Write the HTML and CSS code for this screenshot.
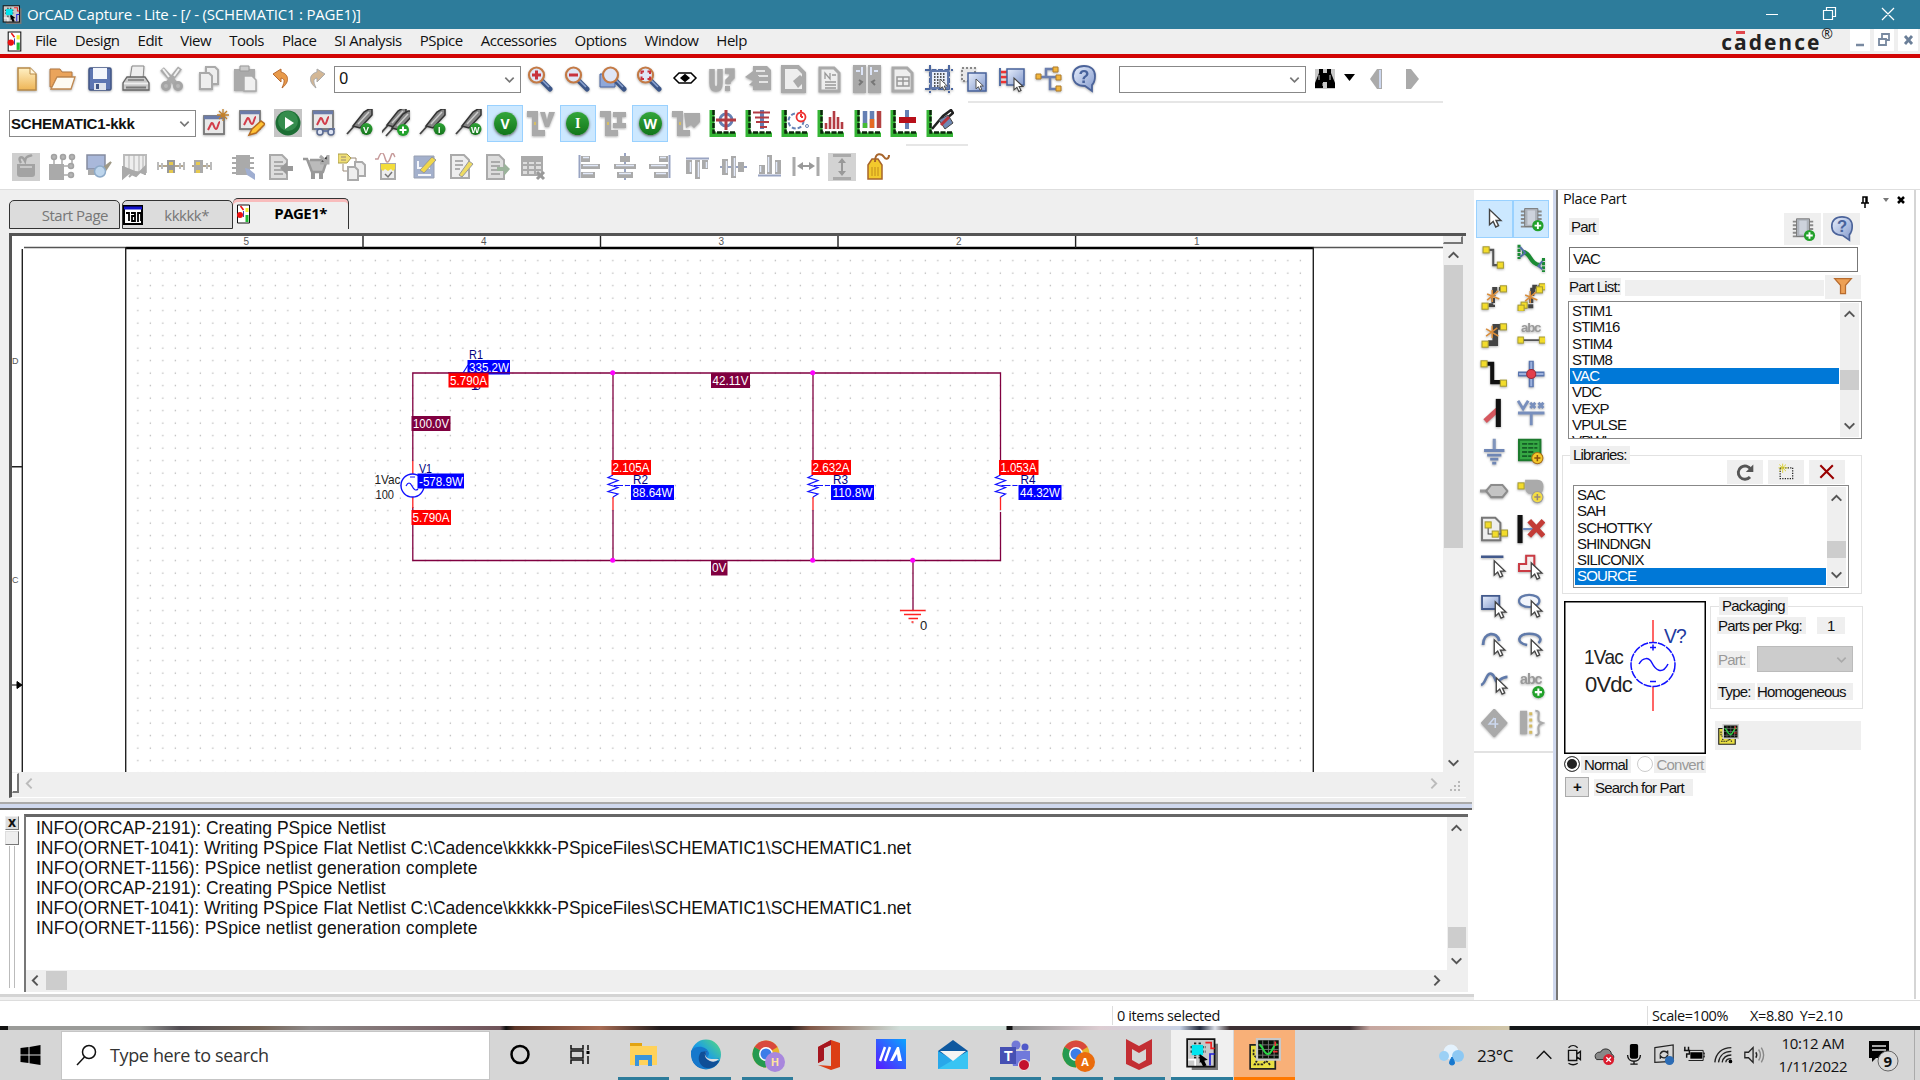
FILE: index.html
```html
<!DOCTYPE html>
<html lang="en">
<head>
<meta charset="utf-8">
<title>OrCAD Capture - Lite</title>
<link rel="stylesheet" href="styles.css">
</head>
<body>
<svg width="0" height="0" class="defs">
<defs>
<linearGradient id="gOr" x1="0" y1="0" x2="0" y2="1"><stop offset="0" stop-color="#fff0c4"/><stop offset="1" stop-color="#eeb556"/></linearGradient>
<linearGradient id="gBl" x1="0" y1="0" x2="1" y2="1"><stop offset="0" stop-color="#e8effc"/><stop offset="1" stop-color="#8198cc"/></linearGradient>
<linearGradient id="gGn" x1="0" y1="0" x2="0" y2="1"><stop offset="0" stop-color="#2fa336"/><stop offset="1" stop-color="#15751c"/></linearGradient>
<linearGradient id="gEdge" x1="0" y1="1" x2="1" y2="0"><stop offset="0" stop-color="#0a58ad"/><stop offset=".5" stop-color="#1c9fe4"/><stop offset="1" stop-color="#58dc7a"/></linearGradient>
<linearGradient id="gMa" x1="0" y1="1" x2="1" y2="0"><stop offset="0" stop-color="#5a16ff"/><stop offset="1" stop-color="#0aa5ff"/></linearGradient>
<g id="cur"><path d="M0 0v14l3.4-3 2.3 5 2.6-1.2-2.3-4.8h4.5z" fill="#fff" stroke="#444" stroke-width="1.3"/></g>
<g id="lens"><path d="M16 16l8 8" stroke="#3c5688" stroke-width="5" stroke-linecap="round"/><path d="M16 15l7 7" stroke="#8ba3d0" stroke-width="1.500"/><circle cx="10.500" cy="10" r="7.500" fill="#dfe6f7" stroke="#c47a45" stroke-width="2.200"/></g>
<g id="axis"><path d="M3 1v25h24" fill="none" stroke="#35b535" stroke-width="5"/><path d="M4.500 1v22.500h22" fill="none" stroke="#0b290b" stroke-width="2.500" stroke-dasharray="5 1.500"/></g>
<g id="probe"><path d="M1 25l9-10" stroke="#444" stroke-width="1.800"/><path d="M7 17L18 3l5-3h3v6L14 19z" fill="#858585" stroke="#333" stroke-width="1.500"/><path d="M12 15L23 3" stroke="#ccc" stroke-width="1.500"/></g>
<g id="dot"><circle cx="20.500" cy="20" r="6" fill="url(#gGn)"/></g>
<g id="y"><rect width="6" height="6" fill="#f3dc2b" stroke="#a59a33"/></g>
<g id="plus"><circle cx="21" cy="21" r="6" fill="#22a12b"/><path d="M21 17.500v7M17.500 21h7" stroke="#fff" stroke-width="2"/></g>
<symbol id="new" viewBox="0 0 28 28"><path d="M5 3h12l6 6v16H5z" fill="url(#gOr)" stroke="#b88a48" stroke-width="1.500"/><path d="M17 3v6h6" fill="#fff6dc" stroke="#b88a48"/></symbol>
<symbol id="open" viewBox="0 0 28 28"><path d="M1 4h10l2 3h10v5H8L3 22H1z" fill="#eaa45c" stroke="#b27842"/><path d="M2 24l6-12h18l-4 12z" fill="#fdfaf2" stroke="#c08850" stroke-width="1.300"/></symbol>
<symbol id="save" viewBox="0 0 28 28"><rect x="3" y="3" width="22" height="22" rx="1.500" fill="#5d76b2" stroke="#415685" stroke-width="1.500"/><path d="M7 3h14v11H7z" fill="#f3f6fd"/><path d="M8 18h12v7H8z" fill="#dfe4ee"/><path d="M10 19h3v5h-3z" fill="#415685"/></symbol>
<symbol id="print" viewBox="0 0 28 28"><path d="M8 14l2-13h12l-1 13" fill="#eee" stroke="#888"/><path d="M5 12h18l4 6v7H1v-7z" fill="#c8c8c8" stroke="#666" stroke-width="1.300"/><path d="M6 15h16" stroke="#777" stroke-width="1.500"/><path d="M2 18.500h24" stroke="#eee" stroke-width="1.800"/><path d="M4 22.500h20" stroke="#777" stroke-width="2"/></symbol>
<symbol id="cut" viewBox="0 0 28 28"><path d="M4 4l13 14M22 3L10 18" stroke="#aaa" stroke-width="5"/><path d="M5 4l6 8M21 4l-5 7" stroke="#f0f0f0" stroke-width="2"/><circle cx="8" cy="21" r="3.500" fill="#b8b8b8" stroke="#a5a5a5" stroke-width="3"/><circle cx="20" cy="21" r="3.500" fill="#b8b8b8" stroke="#a5a5a5" stroke-width="3"/></symbol>
<symbol id="copy" viewBox="0 0 28 28"><path d="M12 2h9l3 3v14H12z" fill="#eee" stroke="#aaa" stroke-width="2"/><path d="M6 8h9l3 3v13H6z" fill="#eee" stroke="#aaa" stroke-width="2"/></symbol>
<symbol id="paste" viewBox="0 0 28 28"><path d="M3 4h21v22H3z" fill="#aaa"/><path d="M9 1h9v5H9z" fill="#ccc" stroke="#999"/><path d="M13 11h8l4 4v11H13z" fill="#f0f0f0" stroke="#aaa" stroke-width="1.500"/></symbol>
<symbol id="undo" viewBox="0 0 28 28"><path d="M6 9l8-5v3c8 2 9 10 1 16 3-7 3-9-1-10v4z" fill="#e89a4a" stroke="#b86a30"/></symbol>
<symbol id="redo" viewBox="0 0 28 28"><path d="M22 9l-8-5v3c-8 2-9 10-1 16-3-7-3-9 1-10v4z" fill="#d3b795" stroke="#aaa"/></symbol>
<symbol id="zin" viewBox="0 0 28 28"><use href="#lens"/><path d="M10.500 5.500v9M6 10h9" stroke="#c8323e" stroke-width="3"/></symbol>
<symbol id="zout" viewBox="0 0 28 28"><use href="#lens"/><path d="M6 10h9" stroke="#c8323e" stroke-width="3"/></symbol>
<symbol id="zarea" viewBox="0 0 28 28"><path d="M1 9h15v13H1z" fill="#90a8d8" stroke="#4b67a3"/><use href="#lens" x="1"/></symbol>
<symbol id="zall" viewBox="0 0 28 28"><use href="#lens"/><path d="M6.500 9V6.500H9M12.500 6.500H15V9M15 11.500v2.500h-2.500M9 14H6.500v-2.500" fill="none" stroke="#c8323e" stroke-width="2"/></symbol>
<symbol id="eye" viewBox="0 0 28 28"><path d="M3 13l5-5h12l5 5-5 5H8z" fill="#fff" stroke="#000" stroke-width="1.500"/><path d="M10.500 13l3.500-3 3.500 3-3.500 3z" fill="#000" stroke="#000" stroke-width="2"/></symbol>
<symbol id="uq" viewBox="0 0 28 28"><path d="M4 4v14q0 6 4 6t4-6V4M17 6h7v6l-4 4v3" fill="none" stroke="#aaa" stroke-width="5.500"/><path d="M17 21h5v5h-5z" fill="#aaa"/></symbol>
<symbol id="back" viewBox="0 0 28 28"><path d="M9 1h14l4 4v20H9z" fill="#aaa"/><path d="M12 6h9M14 11h10M15 17h9" stroke="#e4e4e4" stroke-width="2"/><path d="M14 22l-9-2 4-4-8-4 8-6v5h6z" fill="#aaa"/></symbol>
<symbol id="pgset" viewBox="0 0 28 28"><path d="M3 2h15l6 6v18H3z" fill="#eee" stroke="#aaa" stroke-width="4"/><path d="M13 16l7-6 6 5-8 8z" fill="#aaa"/></symbol>
<symbol id="npage" viewBox="0 0 28 28"><path d="M4 3h14l5 5v18H4z" fill="#eee" stroke="#aaa" stroke-width="3"/><path d="M9 14V8l5 6V8M16 10h4M9 17h11M9 20h11M9 23h11" fill="none" stroke="#999" stroke-width="1.300"/></symbol>
<symbol id="cmp" viewBox="0 0 28 28"><path d="M1 1h11v26H1zM16 1h11v26H16z" fill="#aaa" stroke="#aaa" stroke-width="2"/><path d="M3 6h4M9 2v8M21 6h4M18 2v8" stroke="#dce4f7" stroke-width="2"/><path d="M6 15l3 2-3 3M22 15l-3 2 3 3" fill="none" stroke="#777" stroke-width="2"/></symbol>
<symbol id="rep" viewBox="0 0 28 28"><path d="M4 3h14l5 5v18H4z" fill="#eee" stroke="#aaa" stroke-width="3"/><path d="M8 12h12v9H8zM8 16h12M14 12v9" fill="none" stroke="#999" stroke-width="1.500"/></symbol>
<symbol id="grid" viewBox="0 0 28 28"><path d="M0 5h28M0 24h28M5 0v28M24 0v28" stroke="#4b669f" stroke-width="2" stroke-dasharray="5 1.500"/><rect x="6" y="6" width="17" height="17" fill="#e9eefa" stroke="#6279ac" stroke-width="2"/><path d="M9 9h12M9 12h12M9 15h12M9 18h12M9 21h12" stroke="#222" stroke-width="1.400" stroke-dasharray="1.500 1.500"/><use href="#cur" transform="translate(15 14) scale(.7)"/></symbol>
<symbol id="selarea" viewBox="0 0 28 28"><path d="M1 3h13v13H1z" fill="#e8e8e8" stroke="#888" stroke-width="2" stroke-dasharray="2 2"/><path d="M7 8h18v18H7z" fill="url(#gBl)" stroke="#48639c" stroke-width="1.500"/><use href="#cur" transform="translate(15 14) scale(.7)"/></symbol>
<symbol id="pins" viewBox="0 0 28 28"><path d="M2 3v18" stroke="#5570a5" stroke-width="2"/><path d="M3 7h6M3 12h6M3 17h6" stroke="#e33" stroke-width="2.500"/><path d="M9 4h17v16H9z" fill="url(#gBl)" stroke="#48639c" stroke-width="1.500"/><use href="#cur" transform="translate(16 13) scale(.85)"/></symbol>
<symbol id="tree" viewBox="0 0 28 28"><path d="M4 12h8V4h10M12 12h12M16 12v12h9" fill="none" stroke="#6c7fae" stroke-width="2.500"/><path d="M2 9h5v5H2zM19 2h5v5h-5zM22 10h5v5h-5zM22 21h5v5h-5z" fill="#f1b53c" stroke="#b07d2a"/></symbol>
<symbol id="help" viewBox="0 0 28 28"><path d="M14 1c7 0 11 4 11 10 0 5-1 7-3 9v6l-7-5C7 21 3 17 3 11S7 1 14 1z" fill="url(#gBl)" stroke="#4b639a" stroke-width="1.800"/><text x="8.500" y="17.500" font-size="18" font-weight="bold" fill="#48639c">?</text></symbol>
<symbol id="bino" viewBox="0 0 28 28"><path d="M4 4h20v20H4z" fill="#c9c9c9"/><path d="M8 4h4v4h4V4h4v4l4 10v5h-8v-6h-4v6H4v-5L8 8z" fill="#000"/><path d="M8 10v5M12 18v3M19 10v5" stroke="#ccc"/></symbol>
<symbol id="sim" viewBox="0 0 28 28"><rect x="3" y="7" width="20" height="18" fill="#e8e8e8" stroke="#777" stroke-width="1.800"/><path d="M3 8.500h20" stroke="#6b7ba8" stroke-width="3.500"/><path d="M7 21l3-6c2-4 3 5 5 5s2-7 4-7" fill="none" stroke="#d23c49" stroke-width="2"/></symbol>
<symbol id="simnew" viewBox="0 0 28 28"><use href="#sim" width="28" height="28"/><path d="M22 0v12M16 6h12M18 2l8 8M26 2l-8 8" stroke="#c38029" stroke-width="1.300"/></symbol>
<symbol id="simed" viewBox="0 0 28 28"><use href="#sim" y="-5" width="28" height="28"/><path d="M12 26l3-6 9-8 4 3-9 9z" fill="#ffc335" stroke="#b56b20" stroke-width="1.500"/></symbol>
<symbol id="play" viewBox="0 0 28 28"><path d="M0 0h28v28H0z" fill="#c5c5c5"/><circle cx="14" cy="14" r="12.500" fill="#1c6e34"/><circle cx="14" cy="12" r="10" fill="#358c4d"/><path d="M11 8l9 6-9 6z" fill="#fff"/></symbol>
<symbol id="simv" viewBox="0 0 28 28"><use href="#sim" y="-5" width="28" height="28"/><path d="M5 20h5l2 2h6l2-2h5" fill="none" stroke="#6c7ba6" stroke-width="2"/><circle cx="10" cy="23" r="3" fill="#dde3f2" stroke="#59698f" stroke-width="1.500"/><circle cx="21" cy="23" r="3" fill="#dde3f2" stroke="#59698f" stroke-width="1.500"/></symbol>
<symbol id="pv" viewBox="0 0 28 28"><use href="#probe"/><use href="#dot"/><text x="17" y="23.500" font-size="9" font-weight="bold" fill="#fff">V</text></symbol>
<symbol id="pp" viewBox="0 0 28 28"><use href="#probe" x="-2" y="-1"/><use href="#probe" x="3" y="2"/><use href="#plus"/></symbol>
<symbol id="pi" viewBox="0 0 28 28"><use href="#probe"/><use href="#dot"/><text x="19" y="23.500" font-size="9" font-weight="bold" fill="#fff">I</text></symbol>
<symbol id="pw" viewBox="0 0 28 28"><use href="#probe"/><use href="#dot"/><text x="16" y="23.500" font-size="9" font-weight="bold" fill="#fff">W</text></symbol>
<symbol id="gv" viewBox="0 0 28 28"><path d="M0 2h11v19h7v6H5V8H0z" fill="#aaa"/><path d="M13 3l5 15h4l6-15h-6l-2 8-2-8z" fill="#aaa"/><path d="M8 13v3" stroke="#e5c44d" stroke-width="1.500"/></symbol>
<symbol id="gi" viewBox="0 0 28 28"><path d="M0 2h11v19h7v6H5V8H0z" fill="#aaa"/><path d="M13 3h13v5h-4v6h4v5H13v-5h4V8h-4z" fill="#aaa"/><path d="M8 13v3" stroke="#e5c44d" stroke-width="1.500"/></symbol>
<symbol id="gw" viewBox="0 0 28 28"><path d="M0 2h11v19h7v6H5V8H0z" fill="#aaa"/><path d="M12 4h16v9l-6 6-3-3-5 3z" fill="#aaa"/><path d="M8 13v3" stroke="#e5c44d" stroke-width="1.500"/></symbol>
<symbol id="m1" viewBox="0 0 28 28"><use href="#axis"/><circle cx="17" cy="11" r="6" fill="none" stroke="#6580b4" stroke-width="3"/><path d="M17 1v20M7 11h20" stroke="#b33c43" stroke-width="3"/></symbol>
<symbol id="m2" viewBox="0 0 28 28"><use href="#axis"/><path d="M17 1v19" stroke="#6580b4" stroke-width="4"/><path d="M8 3.500h17M10 8.500h14M11 13h13M15 18h7" stroke="#b33c43" stroke-width="2"/></symbol>
<symbol id="m3" viewBox="0 0 28 28"><use href="#axis"/><circle cx="15" cy="12" r="7.500" fill="#fff" stroke="#6580b4" stroke-width="2" stroke-dasharray="4 2"/><circle cx="20" cy="8" r="4.500" fill="#fff" stroke="#e33" stroke-width="1.800"/><path d="M20 1v3M20 8V5M20 8h2" stroke="#e33" stroke-width="2"/><circle cx="26" cy="17" r="1.500" fill="none" stroke="#6580b4"/></symbol>
<symbol id="m4" viewBox="0 0 28 28"><use href="#axis"/><path d="M9 20v-6M13 20V8M17 20V2M21 20V8M25 20v-7" stroke="#b33c43" stroke-width="2.600"/></symbol>
<symbol id="m5" viewBox="0 0 28 28"><use href="#axis"/><path d="M11 2v17M18 2v17" stroke="#6580b4" stroke-width="4.500"/><path d="M11 14v5" stroke="#45bb34" stroke-width="4.500"/><path d="M18 10v9" stroke="#e56a23" stroke-width="4.500"/><path d="M25 2v17" stroke="#b34242" stroke-width="4.500"/></symbol>
<symbol id="m6" viewBox="0 0 28 28"><use href="#axis"/><path d="M17 1v19" stroke="#6580b4" stroke-width="4"/><path d="M9 11h17" stroke="#b8101a" stroke-width="6"/></symbol>
<symbol id="m7" viewBox="0 0 28 28"><use href="#axis"/><path d="M6 20L17 7l8-6 2 3-7 6" fill="none" stroke="#222" stroke-width="2.500"/><path d="M13 11l9-5 5 8-8 6z" fill="#6f88b4" stroke="#444"/><path d="M15 16l8-8" stroke="#b8343c" stroke-width="3"/></symbol>
<symbol id="a1" viewBox="0 0 28 28"><path d="M0 0h28v28H0z" fill="#cfcfcf"/><path d="M5 11h18v10q0 3-3 3H8q-3 0-3-3z" fill="#a3a3a3"/><path d="M8 14h12" stroke="#c8c8c8" stroke-width="2"/><path d="M9 10c-4-6 1-8 4-2 1-6 4-4 7-6" fill="none" stroke="#a0a0a0" stroke-width="2.500"/></symbol>
<symbol id="a2" viewBox="0 0 28 28"><path d="M1 11h15v16H1z" fill="#aaa"/><g fill="#b5b5b5" stroke="#a2a2a2" stroke-width="1.500"><circle cx="6" cy="4" r="2.500"/><circle cx="15" cy="4" r="2.500"/><circle cx="24" cy="4" r="2.500"/><circle cx="23" cy="13" r="2.500"/><circle cx="23" cy="22" r="2.500"/></g><path d="M6 7v5M14 7v5M24 7v3M16 13h5M16 22h5" stroke="#aaa" stroke-width="1.500"/></symbol>
<symbol id="a3" viewBox="0 0 28 28"><path d="M2 2h18v14H2z" fill="#a9b8da" stroke="#858ca0" stroke-width="1.500"/><path d="M3 17h12v5H3z" fill="#aaa"/><path d="M17 16l9-7-6 9" fill="#a09a88" stroke="#a09a88" stroke-width="2"/><circle cx="15" cy="18.500" r="5.500" fill="#bdd5ec" stroke="#8daac8" stroke-width="1.500"/></symbol>
<symbol id="a4" viewBox="0 0 28 28"><path d="M3 2h22v17H3z" fill="#eee" stroke="#bbb" stroke-width="2"/><path d="M8 2v17M13 2v17M18 2v17M22 2v17" stroke="#b0b0b0"/><path d="M2 13v12l6-5 7 3 9-9v8M8 24l5-5" fill="#aaa" stroke="#aaa" stroke-width="2"/></symbol>
<symbol id="a5" viewBox="0 0 28 28"><path d="M0 13h28" stroke="#b4a78e" stroke-width="2"/><path d="M1 9v8M5 10v6M23 10v6M27 9v8" stroke="#bbb" stroke-width="2"/><path d="M10 7h8v13h-8z" fill="#999"/><path d="M12 9h4v3h-4zM12 17h4v3h-4z" fill="#e6c94f"/></symbol>
<symbol id="a6" viewBox="0 0 28 28"><path d="M3 13h20" stroke="#b4a78e" stroke-width="2"/><path d="M18 10v6M22 9v8" stroke="#bbb" stroke-width="2"/><path d="M5 7h9v13H5z" fill="#aaa"/><path d="M7 9h4v3H7zM7 17h4v3H7z" fill="#e6c94f"/></symbol>
<symbol id="a7" viewBox="0 0 28 28"><path d="M7 2h14v20H7z" fill="#aaa"/><path d="M3 5h22M3 10h22M3 15h22M3 20h18" stroke="#aaa" stroke-width="2"/><path d="M16 15l4 1 6 5v6l-8-5z" fill="#9faed1"/></symbol>
<symbol id="a8" viewBox="0 0 28 28"><path d="M4 2h12l5 5v19H4z" fill="#ddd" stroke="#aaa" stroke-width="2"/><path d="M8 9h9M8 13h9M8 17h9M8 21h9" stroke="#999" stroke-width="1.500"/><path d="M14 15l7-6v4h6v5h-6v4z" fill="#999"/></symbol>
<symbol id="a9" viewBox="0 0 28 28"><path d="M1 6h4l5 13h11l4-12H8" fill="#bbb" stroke="#999" stroke-width="2.500"/><path d="M9 20h4v6H9zM17 20h4v6h-4z" fill="#999"/><path d="M18 3l8 7M26 2v8h-8" stroke="#aaa" stroke-width="3"/></symbol>
<symbol id="a10" viewBox="0 0 28 28"><path d="M0 1h9l4 4-4 5H0z" fill="#f0df75" stroke="#aa9c4c"/><path d="M3 4h5M3 7h5M13 5h5v4M5 11v7h5" fill="none" stroke="#987"/><path d="M17 9h7l3 3v11H17z" fill="#eee" stroke="#aaa" stroke-width="2"/><path d="M10 14h7l3 3v10H10z" fill="#eee" stroke="#aaa" stroke-width="2"/></symbol>
<symbol id="a11" viewBox="0 0 28 28"><path d="M1 6h3c3-8 5-8 7-1s4 4 6-2 3 0 4 1" fill="none" stroke="#c69a9a" stroke-width="1.500"/><path d="M7 11h14v15H7z" fill="#eee" stroke="#aaa" stroke-width="2"/><path d="M7 11h14v5l-2 2-2-2-3 2-3-2-2 2-2-2z" fill="#f3dd3b"/><path d="M11 21l3 3 4-5" fill="none" stroke="#777" stroke-width="1.500"/></symbol>
<symbol id="a12" viewBox="0 0 28 28"><path d="M3 3h20v22H3z" fill="#a3b0cc" stroke="#98a0b2"/><path d="M7 8v7h12M7 22h13" fill="none" stroke="#f4f6fb" stroke-width="2"/><path d="M9 17L21 4l4 3-12 13z" fill="#f0d74b" stroke="#999"/></symbol>
<symbol id="a13" viewBox="0 0 28 28"><path d="M4 2h13l5 5v18H4z" fill="#eee" stroke="#aaa" stroke-width="2"/><path d="M8 8h8M8 12h8M8 16h5" stroke="#999" stroke-width="1.500"/><path d="M12 22L22 8l4 3-11 13z" fill="#eedb62" stroke="#999"/></symbol>
<symbol id="a14" viewBox="0 0 28 28"><path d="M4 2h12l5 5v19H4z" fill="#ddd" stroke="#aaa" stroke-width="2"/><path d="M8 9h9M8 13h9M8 17h9M8 21h9" stroke="#999" stroke-width="1.500"/><path d="M14 14h7v-4l6 6-6 7v-5h-7z" fill="#9bb39b"/></symbol>
<symbol id="a15" viewBox="0 0 28 28"><path d="M3 4h20v18H3z" fill="#ddd" stroke="#aaa" stroke-width="2"/><path d="M3 7h20" stroke="#aaa" stroke-width="4"/><path d="M3 12h20M3 17h20M9 4v18M16 4v18" stroke="#aaa" stroke-width="2"/><path d="M18 19l7 7M25 19l-7 7" stroke="#999" stroke-width="3"/></symbol>
<symbol id="al" viewBox="0 0 28 28"><path d="M5.500 2v23" stroke="#99a4c2" stroke-width="2"/><path d="M7 3h9v6H7zM7 11h19v5H7zM7 19h14v6H7z" fill="#aaa"/><path d="M9 4.500h6M9 12.500h15M9 20.500h10" stroke="#e3eafa" stroke-width="1.500"/></symbol>
<symbol id="ac" viewBox="0 0 28 28"><path d="M14 0v27" stroke="#99a4c2" stroke-width="2"/><path d="M9 3h10v6H9zM3 11h22v5H3zM6 19h16v6H6z" fill="#aaa"/><path d="M5 12.500h18M8 20.500h12" stroke="#e3eafa" stroke-width="1.500"/></symbol>
<symbol id="ar" viewBox="0 0 28 28"><use href="#al" transform="matrix(-1 0 0 1 28 0)" width="28" height="28"/></symbol>
<symbol id="at" viewBox="0 0 28 28"><use href="#al" transform="rotate(90 14 14)" width="28" height="28"/></symbol>
<symbol id="am" viewBox="0 0 28 28"><use href="#ac" transform="rotate(90 14 14)" width="28" height="28"/></symbol>
<symbol id="ab" viewBox="0 0 28 28"><use href="#al" transform="matrix(0 -1 1 0 0 28)" width="28" height="28"/></symbol>
<symbol id="dh" viewBox="0 0 28 28"><path d="M2 4v19M26 4v19" stroke="#aaa" stroke-width="3"/><path d="M7 13h14" stroke="#999" stroke-width="2"/><path d="M5 13l6-4v8zM23 13l-6-4v8z" fill="#999"/></symbol>
<symbol id="dv" viewBox="0 0 28 28"><path d="M0 0h28v28H0z" fill="#d3d3d3"/><path d="M5 2.500h18M5 25.500h18" stroke="#aaa" stroke-width="3"/><path d="M14 7v14" stroke="#999" stroke-width="2"/><path d="M14 5l-4 5h8zM14 23l-4-5h8z" fill="#999"/></symbol>
<symbol id="tag" viewBox="0 0 28 28"><path d="M4 12l4-6h6l4 6v14H4z" fill="#f2c92c" stroke="#a7642b" stroke-width="1.500"/><path d="M11 9c0-11 7-8 9-5s5 2 5-2" fill="none" stroke="#a7642b" stroke-width="2"/><path d="M8 14v9M11 14v9M14 14v9" stroke="#c28c1b"/></symbol>
<symbol id="arrow" viewBox="0 0 28 28"><use href="#cur" transform="translate(9 4) scale(1.150)"/></symbol>
<symbol id="chip" viewBox="0 0 28 28"><path d="M3 6h22M3 10h22M3 14h22M3 18h22M3 22h18" stroke="#8a8a8a" stroke-width="2"/><path d="M7 3h14v19H7z" fill="#aeb3bb" stroke="#777"/><path d="M10 5h8v15h-8z" fill="#cdd2dc"/><use href="#plus"/></symbol>
<symbol id="wire" viewBox="0 0 28 28"><path d="M6 6h7v15h8" fill="none" stroke="#555" stroke-width="2"/><use href="#y" x="3" y="3"/><use href="#y" x="17" y="18"/></symbol>
<symbol id="bundle" viewBox="0 0 28 28"><path d="M5 8c9 0 7 12 18 13" fill="none" stroke="#1b8b34" stroke-width="4"/><path d="M2 1v14M26 14v14" stroke="#1b8b34" stroke-width="3" stroke-dasharray="3 1"/><path d="M3 3l5 6-5 4M25 17l-4 5 4 3" fill="none" stroke="#5270a5" stroke-width="2"/></symbol>
<symbol id="aw1" viewBox="0 0 28 28"><path d="M12 6h9M14 6v7M13 15v7H7" fill="none" stroke="#444" stroke-width="3.500" stroke-dasharray="5 1.500"/><path d="M12 7v12M7 11l12 5M18 8L7 17" stroke="#d98d3b" stroke-width="1.500"/><use href="#y" x="20" y="3"/><use href="#y" x="2" y="20"/></symbol>
<symbol id="aw2" viewBox="0 0 28 28"><path d="M13 7h8M15 4h8M15 8v6M14 15v8H8" fill="none" stroke="#444" stroke-width="4" stroke-dasharray="5 1"/><path d="M13 8v12M8 12l12 5M19 9L8 18" stroke="#d98d3b" stroke-width="1.500"/><use href="#y" x="22" y="1"/><use href="#y" x="19" y="4"/><use href="#y" x="4" y="19"/><use href="#y" x="1" y="22"/></symbol>
<symbol id="aw3" viewBox="0 0 28 28"><path d="M21 6h-6v16H8" fill="none" stroke="#444" stroke-width="5.500"/><path d="M12 5v12M6 8l12 7M17 7L6 15" stroke="#d98d3b" stroke-width="1.500"/><use href="#y" x="20" y="3"/><use href="#y" x="2" y="20"/></symbol>
<symbol id="abc" viewBox="0 0 28 28"><text x="4" y="11" font-size="13" font-weight="bold" fill="#999" textLength="20">abc</text><path d="M5 19h19" stroke="#555" stroke-width="1.800"/><use href="#y" x="1" y="16" transform="scale(.9 1)"/><use href="#y" x="22" y="16"/></symbol>
<symbol id="bus" viewBox="0 0 28 28"><path d="M5 4h7v18h9" fill="none" stroke="#111" stroke-width="4"/><use href="#y" x="1" y="1"/><use href="#y" x="20" y="20"/></symbol>
<symbol id="junc" viewBox="0 0 28 28"><path d="M14 1v26M1 14h26" stroke="#5874ae" stroke-width="5"/><path d="M14 2v24M2 14h24" stroke="#9db2dd" stroke-width="2"/><circle cx="14" cy="14" r="4.500" fill="#e33e4a" stroke="#9a2430"/></symbol>
<symbol id="ent" viewBox="0 0 28 28"><path d="M5 22l12-11" stroke="#d6575e" stroke-width="5"/><path d="M18 0v28" stroke="#111" stroke-width="5"/></symbol>
<symbol id="vcc" viewBox="0 0 28 28"><path d="M1 2l5 8 5-8M13 4l5 5M18 4l-5 5M21 4l5 5M26 4l-5 5M1 14h26M14 14v12" fill="none" stroke="#788fbd" stroke-width="2.800"/></symbol>
<symbol id="gnd" viewBox="0 0 28 28"><path d="M14 1v12" stroke="#8195bc" stroke-width="3"/><path d="M4 12.500h20M7 17h14M10 21h8M12 25h4" stroke="#6f86b5" stroke-width="2.800"/></symbol>
<symbol id="hier" viewBox="0 0 28 28"><path d="M2 2h21v20H2z" fill="#36a844" stroke="#1c7a2d" stroke-width="2"/><path d="M5 6h15M5 10h15M5 14h12M5 18h9" stroke="#155e26" stroke-width="1.800" stroke-dasharray="5 1"/><circle cx="20" cy="20" r="5.500" fill="#f3c82a" stroke="#a86c17"/><path d="M20 17v6M17 20h6" stroke="#89500d" stroke-width="1.500"/></symbol>
<symbol id="port" viewBox="0 0 28 28"><path d="M0 14h7" stroke="#999" stroke-width="3"/><path d="M6 14l5-6h11l5 6-5 6H11z" fill="#c4c4c4" stroke="#8c8c8c" stroke-width="2"/></symbol>
<symbol id="hp" viewBox="0 0 28 28"><path d="M8 3h12q6 0 6 7t-6 7h-6q-6 0-6-7z" fill="#aaa"/><use href="#y" x="1" y="6"/><circle cx="20" cy="20" r="5.500" fill="#f4dd43" stroke="#999"/><path d="M20 17v6M17 20h6" stroke="#987" stroke-width="1.500"/></symbol>
<symbol id="off" viewBox="0 0 28 28"><path d="M2 3h13l5 5v17H2z" fill="#eee" stroke="#777" stroke-width="2"/><path d="M8 9v10h16" fill="none" stroke="#444"/><use href="#y" x="5" y="7"/><use href="#y" x="12" y="16"/><use href="#y" x="21" y="15"/></symbol>
<symbol id="nc" viewBox="0 0 28 28"><path d="M3 0v28" stroke="#111" stroke-width="5"/><path d="M6 14h12" stroke="#6d8ac1" stroke-width="2"/><path d="M12 6l14 15M26 6L12 21" stroke="#c33b36" stroke-width="5"/></symbol>
<symbol id="line" viewBox="0 0 28 28"><path d="M1 3h22" stroke="#42598c" stroke-width="2.500"/><use href="#cur" transform="translate(14 7)"/></symbol>
<symbol id="poly" viewBox="0 0 28 28"><path d="M2 17v-7h7V2h8v15z" fill="#f6eeee" stroke="#ca3b44" stroke-width="2"/><use href="#cur" transform="translate(14 9)"/></symbol>
<symbol id="rect" viewBox="0 0 28 28"><path d="M2 3h17v13H2z" fill="url(#gBl)" stroke="#42598c" stroke-width="1.800"/><use href="#cur" transform="translate(15 9)"/></symbol>
<symbol id="ell" viewBox="0 0 28 28"><ellipse cx="12" cy="8" rx="10" ry="6" fill="#f2f5fb" stroke="#607aaa" stroke-width="2.200"/><use href="#cur" transform="translate(14 8)"/></symbol>
<symbol id="arc" viewBox="0 0 28 28"><path d="M3 13C3 0 17-1 19 9" fill="none" stroke="#607aaa" stroke-width="2.800"/><use href="#cur" transform="translate(14 8)"/></symbol>
<symbol id="earc" viewBox="0 0 28 28"><path d="M10 13C-2 11 1 2 12 2s13 6 9 9" fill="none" stroke="#607aaa" stroke-width="2.500"/><use href="#cur" transform="translate(14 8)"/></symbol>
<symbol id="bez" viewBox="0 0 28 28"><path d="M1 14C6 13 6 1 11 3s3 10 7 7 5-4 9-4" fill="none" stroke="#607aaa" stroke-width="2.500"/><use href="#cur" transform="translate(16 7)"/></symbol>
<symbol id="text" viewBox="0 0 28 28"><text x="3" y="13" font-size="14" font-weight="bold" fill="#999" textLength="22">abc</text><use href="#plus"/></symbol>
<symbol id="dia" viewBox="0 0 28 28"><path d="M14 1l12 13-12 13L2 14z" fill="#aaa" stroke="#aaa" stroke-width="2" stroke-linejoin="round"/><path d="M15 9v10M14 9l-5 6h9" fill="none" stroke="#ccd8ee" stroke-width="1.500"/></symbol>
<symbol id="brace" viewBox="0 0 28 28"><path d="M3 2h7v23H3z" fill="#aaa"/><path d="M12 5h3M12 11h3M12 17h3M12 23h3" stroke="#d4bb63" stroke-width="3"/><path d="M18 2c5 0 3 3 3 7s1 4 4 5c-3 1-4 2-4 5s2 7-3 7" fill="none" stroke="#aaa" stroke-width="2"/></symbol>
<symbol id="doc" viewBox="0 0 14 20"><path d="M1 1h12v18H1z" fill="#fff" stroke="#111"/><circle cx="3.500" cy="11" r="3" fill="#e11"/><path d="M4 2l3 4" stroke="#e11" stroke-width="1.500"/><path d="M9 4h3v4H9z" fill="#ee3"/><path d="M9 11h3v7H9z" fill="#2b3"/><path d="M7 7v6" stroke="#44a"/></symbol>
<symbol id="cap" viewBox="0 0 28 28"><path d="M5 5h23v23H5z" fill="#777"/><path d="M1 1h24v24H1z" fill="#c9c9c9" stroke="#111" stroke-width="1.500"/><path d="M4 8h13M4 12h13M8 4v14M12 4v14" stroke="#222" stroke-width="2" stroke-dasharray="1.500 1"/><path d="M5 6h10v9H5z" fill="#00e5ee"/><path d="M17 4h5v5h3" fill="none" stroke="#e22" stroke-width="1.500"/><path d="M25 14h-4v10" fill="none" stroke="#22d" stroke-width="1.500"/><path d="M2 19h6v5" fill="none" stroke="#fff" stroke-width="1.500"/><path d="M12 14l7 5-3 1 2 4-3 1-2-4-1 1z" fill="#000"/></symbol>
<symbol id="spice" viewBox="0 0 28 28"><path d="M1 6h22v21H1z" fill="#e9df43" stroke="#222" stroke-width="1.500"/><path d="M4 10v5l4 3-3 5h7l3-3 4 4" fill="none" stroke="#222" stroke-width="1.500" stroke-dasharray="2 1"/><path d="M7 1h20v18H7z" fill="#081008" stroke="#c8c8c8" stroke-width="2"/><path d="M8 6h18M8 10h18M8 15h18M12 2v16M17 2v16M22 2v16" stroke="#777" stroke-width=".8"/><path d="M9 6c3 0 4 9 8 8s4-10 8-8" fill="none" stroke="#2bd546" stroke-width="1.800"/><path d="M23 3v4M21 12h4" stroke="#e33" stroke-width="1.500"/></symbol>
<symbol id="chrome" viewBox="0 0 32 32"><circle cx="15" cy="15" r="13.500" fill="#e8b52e"/><path d="M15 15L3.500 8a13.500 13.500 0 0 1 23 0z" fill="#d9493d"/><path d="M15 15v13.500A13.500 13.500 0 0 1 3.500 8z" fill="#249a50"/><circle cx="15" cy="15" r="7" fill="#fff"/><circle cx="15" cy="15" r="5.500" fill="#3b7de8"/></symbol>
<symbol id="chev" viewBox="0 0 14 14"><path d="M2.500 5L7 9.500 11.500 5" fill="none" stroke="currentColor" stroke-width="1.800"/></symbol>
</defs>
</svg>

<header class="titlebar">
  <svg class="app-ic"><use href="#cap"/></svg>
  <span class="title">OrCAD Capture - Lite - [/ - (SCHEMATIC1 : PAGE1)]</span>
  <svg class="win-btns" viewBox="0 0 140 29"><path d="M5 14.500h12M62.500 10.500h9v9h-9zM65.500 10.500v-3h9v9h-3M121 8l12 12M133 8l-12 12" fill="none" stroke="#fff" stroke-width="1.200"/></svg>
</header>

<nav class="menubar">
  <svg class="doc-ic"><use href="#doc"/></svg>
  <span class="mi">File</span><span class="mi">Design</span><span class="mi">Edit</span><span class="mi">View</span><span class="mi">Tools</span><span class="mi">Place</span><span class="mi">SI Analysis</span><span class="mi">PSpice</span><span class="mi">Accessories</span><span class="mi">Options</span><span class="mi">Window</span><span class="mi">Help</span>
  <span class="brand">c<span class="macron">a</span>dence<sup>®</sup></span>
  <svg class="mdi" viewBox="0 0 72 24"><path d="M2 1h20v22H2zM26 1h20v22H26zM50 1h20v22H50z" fill="#fff"/><path d="M8 17h8" stroke="#7889a0" stroke-width="2.500"/><path d="M31 11h7v6h-7zM34 11V6h7v6h-3" fill="none" stroke="#7889a0" stroke-width="1.800"/><path d="M57 8l7 8M64 8l-7 8" stroke="#6b7f98" stroke-width="2.800"/></svg>
</nav>

<section class="toolbars">
  <div class="row r1">
    <svg class="ic"><use href="#new"/></svg><svg class="ic"><use href="#open"/></svg><svg class="ic"><use href="#save"/></svg><svg class="ic"><use href="#print"/></svg><svg class="ic"><use href="#cut"/></svg><svg class="ic"><use href="#copy"/></svg><svg class="ic"><use href="#paste"/></svg><svg class="ic flat"><use href="#undo"/></svg><svg class="ic flat"><use href="#redo"/></svg>
    <div class="combo"><span>0</span><svg class="cv"><use href="#chev"/></svg></div>
    <svg class="ic"><use href="#zin"/></svg><svg class="ic"><use href="#zout"/></svg><svg class="ic"><use href="#zarea"/></svg><svg class="ic"><use href="#zall"/></svg><svg class="ic flat"><use href="#eye"/></svg><svg class="ic"><use href="#uq"/></svg><svg class="ic"><use href="#back"/></svg><svg class="ic"><use href="#pgset"/></svg><svg class="ic"><use href="#npage"/></svg><svg class="ic"><use href="#cmp"/></svg><svg class="ic"><use href="#rep"/></svg><svg class="ic"><use href="#grid"/></svg><svg class="ic"><use href="#selarea"/></svg><svg class="ic"><use href="#pins"/></svg><svg class="ic"><use href="#tree"/></svg><svg class="ic"><use href="#help"/></svg>
    <div class="combo find"><span></span><svg class="cv"><use href="#chev"/></svg></div>
    <svg class="bino"><use href="#bino"/></svg>
    <svg class="navs" viewBox="0 0 90 28"><path d="M3 9h11l-5.500 7z" fill="#000"/><path d="M41 4v20l-5 0-7-10 7-10z" fill="#aaa"/><path d="M39 5v18" stroke="#ccd7ef" stroke-width="2"/><path d="M65 4h5l8 10-8 10h-5z" fill="#aaa"/></svg>
  </div>
  <div class="row r2">
    <div class="combo profile"><b>SCHEMATIC1-kkk</b><svg class="cv"><use href="#chev"/></svg></div>
    <svg class="ic"><use href="#simnew"/></svg><svg class="ic"><use href="#simed"/></svg><svg class="ic flat"><use href="#play"/></svg><svg class="ic"><use href="#simv"/></svg><svg class="ic"><use href="#pv"/></svg><svg class="ic"><use href="#pp"/></svg><svg class="ic"><use href="#pi"/></svg><svg class="ic"><use href="#pw"/></svg>
    <div class="tog"><i>V</i></div><svg class="ic"><use href="#gv"/></svg><div class="tog"><i class="serif">I</i></div><svg class="ic"><use href="#gi"/></svg><div class="tog"><i>W</i></div><svg class="ic"><use href="#gw"/></svg>
    <svg class="ic flat"><use href="#m1"/></svg><svg class="ic flat"><use href="#m2"/></svg><svg class="ic flat"><use href="#m3"/></svg><svg class="ic flat"><use href="#m4"/></svg><svg class="ic flat"><use href="#m5"/></svg><svg class="ic flat"><use href="#m6"/></svg><svg class="ic flat"><use href="#m7"/></svg>
  </div>
  <div class="row r3">
    <svg class="ic flat"><use href="#a1"/></svg><svg class="ic flat"><use href="#a2"/></svg><svg class="ic flat"><use href="#a3"/></svg><svg class="ic flat"><use href="#a4"/></svg><svg class="ic flat"><use href="#a5"/></svg><svg class="ic flat nar"><use href="#a6"/></svg>
    <svg class="ic g1 flat"><use href="#a7"/></svg><svg class="ic flat"><use href="#a8"/></svg><svg class="ic flat"><use href="#a9"/></svg><svg class="ic flat"><use href="#a10"/></svg><svg class="ic flat"><use href="#a11"/></svg><svg class="ic flat"><use href="#a12"/></svg><svg class="ic flat"><use href="#a13"/></svg><svg class="ic flat"><use href="#a14"/></svg><svg class="ic flat"><use href="#a15"/></svg>
    <svg class="ic flat g2"><use href="#al"/></svg><svg class="ic flat"><use href="#ac"/></svg><svg class="ic flat"><use href="#ar"/></svg><svg class="ic flat"><use href="#at"/></svg><svg class="ic flat"><use href="#am"/></svg><svg class="ic flat"><use href="#ab"/></svg><svg class="ic flat"><use href="#dh"/></svg><svg class="ic flat"><use href="#dv"/></svg><svg class="ic flat"><use href="#tag"/></svg>
  </div>
</section>

<main class="work">
  <div class="left">
    <div class="tabs">
      <div class="tab"><span class="tl">Start Page</span></div>
      <div class="tab"><svg class="tic" viewBox="0 0 20 20"><path d="M1 1h18v18H1z" fill="#fff" stroke="#000" stroke-width="2"/><path d="M1 3h18" stroke="#11c" stroke-width="3"/><path d="M3 8h3v8M8 8h4v3H9v5h3v-5M15 7v10M15 8h3v8" fill="none" stroke="#000" stroke-width="1.800"/></svg><span class="tl">kkkkk*</span></div>
      <div class="tab on"><svg class="tic2"><use href="#doc"/></svg><span class="tl">PAGE1*</span></div>
    </div>
    <div class="docwin">
      <svg class="canvas" viewBox="12 236 1431 536">
        <defs><pattern id="dots" x="131.700" y="254.500" width="12.500" height="12.500" patternUnits="userSpaceOnUse"><rect x="5.500" y="5.500" width="1.300" height="1.300" fill="#b4b4b4"/></pattern></defs>
        <rect x="131" y="254" width="1178" height="518" fill="url(#dots)"/>
        <path d="M24 247.500h102" stroke="#555" stroke-width="1.500"/><path d="M126 248h1188" stroke="#000" stroke-width="2.500"/><path d="M1314 247.500h129" stroke="#555" stroke-width="1.500"/>
        <path d="M22.300 249v523M125.700 247v525M1313.300 247v525M363 236v12M600.500 236v12M838 236v12M1075.600 236v12M12 466.700h10" stroke="#222" stroke-width="1.400" fill="none"/>
        <path d="M12 685h8M22 685l-5-3.500v7z" fill="#000" stroke="#000"/>
        <g font-size="10" fill="#555"><text x="243.500" y="244.500">5</text><text x="481" y="244.500">4</text><text x="718.500" y="244.500">3</text><text x="956" y="244.500">2</text><text x="1194" y="244.500">1</text><text x="12" y="364" font-size="9">D</text><text x="12" y="583" font-size="9">C</text></g>
        <g font-size="13" fill="#000080"><text x="469" y="359" textLength="14" lengthAdjust="spacingAndGlyphs">R1</text><text x="471" y="389.500" font-size="12" textLength="10">10</text><text x="419" y="473" textLength="13" lengthAdjust="spacingAndGlyphs">V1</text>
        <text x="633" y="484" textLength="15" lengthAdjust="spacingAndGlyphs">R2</text><text x="833" y="484" textLength="15" lengthAdjust="spacingAndGlyphs">R3</text><text x="1020.500" y="484" textLength="15" lengthAdjust="spacingAndGlyphs">R4</text></g>
        <g font-size="13" fill="#222"><text x="374.500" y="484" textLength="26" lengthAdjust="spacingAndGlyphs">1Vac</text><text x="375.500" y="499" textLength="18.500" lengthAdjust="spacingAndGlyphs">100</text><text x="920" y="630" textLength="7.500">0</text></g>
        <g fill="none" stroke="#800040" stroke-width="1.300"><path d="M412.800 461V373h587.700v90M412.800 507v53.500h587.700V512M613 373v90M813 373v90M613 510v50.500M813 510v50.500M913 560.500V610"/></g>
        <g fill="none" stroke="#f22" stroke-width="1.300"><path d="M412.800 461v13M412.800 497v11M613 497v13M813 497v13M1000.500 497v13M900 610.500h25.500M904 614.500h17M908.500 618.500h9.500M911.500 622h2"/></g>
        <g fill="none" stroke="#11f" stroke-width="1.200"><circle cx="412.500" cy="485.500" r="11.500" stroke-width="1.400"/><path d="M406 486q3-6 6 0t6 3M410 477h5M463 373l5-8"/>
        <path id="res" d="M613 475l-5 2.500 10 3-10 4 10 3-10 4 10 2.500-5 3M614 485.500h9M625 485.500h5"/><use href="#res" x="200"/><use href="#res" x="387.500"/></g>
        <g fill="#f0f"><circle cx="612.700" cy="372.700" r="2.500"/><circle cx="812.700" cy="372.700" r="2.500"/><circle cx="612.700" cy="560.300" r="2.500"/><circle cx="812.700" cy="560.300" r="2.500"/><circle cx="912.700" cy="560.300" r="2.500"/></g>
        <g fill="#00f"><path d="M467.500 360h42.500v14.500h-42.500zM417.500 473.500h46.500v15h-46.500zM631 485h43v15h-43zM831 485h43v15h-43zM1018.500 485h43v15h-43z"/></g>
        <g fill="#f00"><path d="M448.500 373h40v14.500h-40zM411.500 510h39.500v15h-39.500zM611.500 460h39.500v15h-39.500zM811.500 460h39.500v15h-39.500zM999 460h39.500v15h-39.500z"/></g>
        <g fill="#800040"><path d="M411.500 416h39v15h-39zM711 373h39v15h-39zM711 561h16.500v14.500h-16.500z"/></g>
        <path d="M448 372.800h62" stroke="#800040"/>
        <g font-size="12.500" fill="#fff"><text x="469" y="371.500" textLength="40" lengthAdjust="spacingAndGlyphs">335.2W</text><text x="450" y="384.500" textLength="37" lengthAdjust="spacingAndGlyphs">5.790A</text><text x="413" y="428" textLength="36" lengthAdjust="spacingAndGlyphs">100.0V</text><text x="419" y="485.500" textLength="44" lengthAdjust="spacingAndGlyphs">-578.9W</text><text x="412.500" y="521.500" textLength="37" lengthAdjust="spacingAndGlyphs">5.790A</text><text x="612.500" y="471.500" textLength="37" lengthAdjust="spacingAndGlyphs">2.105A</text><text x="632.500" y="496.500" textLength="40" lengthAdjust="spacingAndGlyphs">88.64W</text><text x="812.500" y="471.500" textLength="37" lengthAdjust="spacingAndGlyphs">2.632A</text><text x="832.500" y="496.500" textLength="40" lengthAdjust="spacingAndGlyphs">110.8W</text><text x="1000.500" y="471.500" textLength="36" lengthAdjust="spacingAndGlyphs">1.053A</text><text x="1020" y="496.500" textLength="40" lengthAdjust="spacingAndGlyphs">44.32W</text><text x="712.500" y="384.500" textLength="36" lengthAdjust="spacingAndGlyphs">42.11V</text><text x="712" y="572" textLength="14.500" lengthAdjust="spacingAndGlyphs">0V</text></g>
      </svg>
      <div class="vs"><i class="split"></i><svg class="ar up"><use href="#chev"/></svg><i class="thumb"></i><svg class="ar dn"><use href="#chev"/></svg></div>
      <div class="hs"><i class="split2"></i><svg class="ar lf dim"><use href="#chev"/></svg><svg class="ar rt dim"><use href="#chev"/></svg><svg class="grip" viewBox="0 0 12 12"><path d="M9 1h2M5 5h2M9 5h2M1 9h2M5 9h2M9 9h2" stroke="#b9b9b9" stroke-width="2"/></svg></div>
    </div>
    <div class="hsplit"></div>
    <div class="output">
      <div class="gut"><b>x</b><span></span><i></i></div>
      <div class="log">
        <div class="lines"><p>INFO(ORCAP-2191): Creating PSpice Netlist</p><p>INFO(ORNET-1041): Writing PSpice Flat Netlist C:\Cadence\kkkkk-PSpiceFiles\SCHEMATIC1\SCHEMATIC1.net</p><p class="wide">INFO(ORNET-1156): PSpice netlist generation complete</p><p>INFO(ORCAP-2191): Creating PSpice Netlist</p><p>INFO(ORNET-1041): Writing PSpice Flat Netlist C:\Cadence\kkkkk-PSpiceFiles\SCHEMATIC1\SCHEMATIC1.net</p><p class="wide">INFO(ORNET-1156): PSpice netlist generation complete</p></div>
        <div class="lvs"><svg class="ar up"><use href="#chev"/></svg><i class="thumb"></i><svg class="ar dn"><use href="#chev"/></svg></div>
        <div class="lhs"><svg class="ar lf"><use href="#chev"/></svg><i class="thumb"></i><svg class="ar rt"><use href="#chev"/></svg></div>
      </div>
    </div>
  </div>

  <div class="palette"><div class="pgrid">
    <svg class="sel"><use href="#arrow"/></svg><svg class="sel"><use href="#chip"/></svg>
    <svg><use href="#wire"/></svg><svg><use href="#bundle"/></svg>
    <svg><use href="#aw1"/></svg><svg><use href="#aw2"/></svg>
    <svg><use href="#aw3"/></svg><svg><use href="#abc"/></svg>
    <svg><use href="#bus"/></svg><svg><use href="#junc"/></svg>
    <svg><use href="#ent"/></svg><svg><use href="#vcc"/></svg>
    <svg><use href="#gnd"/></svg><svg><use href="#hier"/></svg>
    <svg><use href="#port"/></svg><svg><use href="#hp"/></svg>
    <svg><use href="#off"/></svg><svg><use href="#nc"/></svg>
    <svg><use href="#line"/></svg><svg><use href="#poly"/></svg>
    <svg><use href="#rect"/></svg><svg><use href="#ell"/></svg>
    <svg><use href="#arc"/></svg><svg><use href="#earc"/></svg>
    <svg><use href="#bez"/></svg><svg><use href="#text"/></svg>
    <svg><use href="#dia"/></svg><svg><use href="#brace"/></svg>
  </div></div>

  <div class="vsplit"></div>

  <aside class="place">
    <div class="phead"><span>Place Part</span><svg viewBox="0 0 60 16"><path d="M3 10h8M5 9.500V4h4v5.500M8 4v6M7 10v5" fill="none" stroke="#000" stroke-width="1.500"/><path d="M25 5h6l-3 4z" fill="#777"/><path d="M40 4l6 6M46 4l-6 6" stroke="#000" stroke-width="2.500"/></svg></div>
    <div class="prow"><span class="lab">Part</span><span class="sq big"><svg><use href="#chip"/></svg></span><span class="sq big"><svg><use href="#help"/></svg></span></div>
    <div class="pinput">VAC</div>
    <div class="plist-h"><span class="lab">Part List:</span><span class="fill"></span><span class="sq fil"><svg viewBox="0 0 24 24"><path d="M2 2h20l-7 8v10H9V10z" fill="#eda055" stroke="#b86c2f" stroke-width="1.500"/></svg></span></div>
    <div class="lb parts"><ul><li>STIM1</li><li>STIM16</li><li>STIM4</li><li>STIM8</li><li class="hl">VAC</li><li>VDC</li><li>VEXP</li><li>VPULSE</li><li>VPWL</li></ul><div class="sb"><svg class="ar up"><use href="#chev"/></svg><i class="thumb"></i><svg class="ar dn"><use href="#chev"/></svg></div></div>
    <fieldset class="libs"><legend>Libraries:</legend>
      <div class="btns"><span class="sq"><svg viewBox="0 0 24 24"><path d="M18 18a8 8 0 1 1 1-9" fill="none" stroke="#555" stroke-width="3.500"/><path d="M22 3v9h-9z" fill="#555"/></svg></span><span class="sq"><svg viewBox="0 0 24 24"><path d="M5 7h15v13H5z" fill="none" stroke="#222" stroke-width="1.500" stroke-dasharray="1.500 1.500"/><path d="M8 2v11M3 7h11M4 3l8 8M12 3l-8 8" stroke="#d7cc20"/></svg></span><span class="sq"><svg viewBox="0 0 24 24"><path d="M4 4l16 16M19 4L4 19" stroke="#900" stroke-width="2.500"/></svg></span></div>
      <div class="lb"><ul><li>SAC</li><li>SAH</li><li>SCHOTTKY</li><li>SHINDNGN</li><li>SILICONIX</li><li class="hl">SOURCE</li></ul><div class="sb"><svg class="ar up"><use href="#chev"/></svg><i class="thumb"></i><svg class="ar dn"><use href="#chev"/></svg></div></div>
    </fieldset>
    <div class="lower">
      <svg class="preview" viewBox="0 0 142 153"><rect x=".750" y=".750" width="140.500" height="151.500" fill="#fff" stroke="#000" stroke-width="1.500"/><path d="M89 19v22M89 86v24" stroke="#f33" stroke-width="1.500"/><circle cx="89" cy="63.500" r="22" fill="none" stroke="#11f" stroke-width="1.500" stroke-dasharray="8 1"/><path d="M75 63c4-7 10-7 13-1s10 13 16 1M86 46.500h6M89 43.500v6M86 80.500h6" fill="none" stroke="#11f" stroke-width="1.500"/><text x="20" y="63" font-size="21" textLength="39" lengthAdjust="spacingAndGlyphs" fill="#222">1Vac</text><text x="21" y="91" font-size="22" textLength="47" lengthAdjust="spacingAndGlyphs" fill="#222">0Vdc</text><text x="100" y="42" font-size="21" textLength="22" lengthAdjust="spacingAndGlyphs" fill="#223aa0">V?</text></svg>
      <div class="pk">
        <fieldset><legend>Packaging</legend>
          <div class="kr"><span class="lab">Parts per Pkg:</span><span class="lab one">1</span></div>
          <div class="kr k2"><span class="lab off">Part:</span><span class="dd"><svg class="cv"><use href="#chev"/></svg></span></div>
          <div class="kr"><span class="lab">Type:</span><span class="lab homo">Homogeneous</span></div>
        </fieldset>
        <div class="spbar"><svg><use href="#spice"/></svg></div>
      </div>
    </div>
    <div class="radios"><i class="rad on"></i><span class="lab">Normal</span><i class="rad"></i><span class="lab off">Convert</span></div>
    <div class="search"><b>+</b><span class="lab">Search for Part</span></div>
  </aside>
</main>

<footer class="status"><span class="s1">0 items selected</span><span class="s2">Scale=100%</span><span class="s3">X=8.80&nbsp; Y=2.10</span></footer>
<div class="wall"></div>

<div class="taskbar">
  <div class="start"><svg viewBox="0 0 20 20"><path d="M0 3l8-1v7.500H0zM9 1.900L20 0v9.500H9zM0 10.500h8V18l-8-1zM9 10.500h11V20L9 18.200z"/></svg></div>
  <div class="sbox"><svg viewBox="0 0 22 22"><circle cx="14" cy="8" r="6.500" fill="none" stroke="#111" stroke-width="1.500"/><path d="M9.500 13L2 21" stroke="#111" stroke-width="1.500"/></svg><span>Type here to search</span></div>
  <div class="tb cort"><svg viewBox="0 0 32 32"><circle cx="16" cy="15.500" r="8.500" fill="none" stroke="#000" stroke-width="2.500"/></svg></div>
  <div class="tb tv"><svg viewBox="0 0 32 32"><path d="M6 6v4h12V6M6 25v-4h12v4M6 12h12v7H6zM23 6v5M23 17v8" fill="none" stroke="#111" stroke-width="1.500"/><path d="M21.500 12h3v3h-3z"/></svg></div>
  <div class="tb run"><svg viewBox="0 0 32 32"><path d="M3 4h12v5H3z" fill="#e2a413"/><path d="M3 7h27v19H3z" fill="#ffd25a"/><path d="M8 27V16h17v11h-4v-6h-9v6z" fill="#3b95dc"/></svg></div>
  <div class="tb run"><svg viewBox="0 0 32 32"><circle cx="17" cy="15.500" r="15" fill="url(#gEdge)"/><path d="M2 12c5-7 16-5 18 2 0 2-1 3-2 4 3 4 8 3 12 1-6 13-23 14-27 1z" fill="#1678cc"/><path d="M12 13c-6 8 1 18 10 16 4-1 7-4 9-8-6 3-13 1-14-4-1-3 1-5 1-5z" fill="#0f4f97"/><path d="M18 11c-5 4 0 10 6 9h6q-4 4-9 2c-5-2-7-7-3-11z" fill="#d9dde2"/></svg></div>
  <div class="tb run"><svg><use href="#chrome"/></svg><i class="av vio">H</i></div>
  <div class="tb"><svg viewBox="0 0 32 32"><path d="M5 8l13-7 9 3v24l-9 3-13-5 13 1V6l-7 3v12l-6 3z" fill="#dc3e15"/><path d="M5 8l13-7v5l-7 3v12l-6 3z" fill="#a51620"/></svg></div>
  <div class="tb"><svg viewBox="0 0 32 32"><path d="M1 0h30v30H1z" fill="url(#gMa)"/><path d="M5 22l5-14M10 22l5-14" stroke="#fff" stroke-width="2.500"/><path d="M15 22l7-14h2l3 14h-4l-1-7-4 7z" fill="#fff"/></svg></div>
  <div class="tb"><svg viewBox="0 0 32 32"><path d="M1 12L16 1l15 11v3L16 22 1 15z" fill="#0e589f"/><path d="M1 12l30 18H1z" fill="#28a8ea"/><path d="M31 12L1 30h30z" fill="#38c4f3"/><path d="M3 12h26l-13 10z" fill="#f4f4f4"/></svg></div>
  <div class="tb run team"><svg viewBox="0 0 32 32"><circle cx="17" cy="6" r="4.500" fill="#7278d6"/><circle cx="26" cy="8" r="3.500" fill="#5059c9"/><path d="M11 12h20v10l-6 5H14z" fill="#7079db"/><path d="M1 8h16v17H1z" fill="#4650b3"/><text x="5" y="21.500" font-size="14" font-weight="bold" fill="#fff">T</text><circle cx="25" cy="26" r="5.500" fill="#c4122e" stroke="#eee"/></svg></div>
  <div class="tb run"><svg><use href="#chrome"/></svg><i class="av ora">A</i></div>
  <div class="tb run"><svg viewBox="0 0 32 32"><path d="M3 0l13 7 13-7v25l-13 6-13-6zM9 10v11l7 4 7-4V10l-7 4z" fill="#c32e33" fill-rule="evenodd"/></svg></div>
  <div class="tb act"><svg><use href="#cap"/></svg></div>
  <div class="tb alert"><svg><use href="#spice"/></svg></div>
  <div class="tray">
    <svg class="wx" viewBox="0 0 28 24"><circle cx="13" cy="9" r="7.500" fill="#e4f2fd"/><circle cx="6" cy="13" r="5" fill="#9bd0f5"/><circle cx="20" cy="13" r="6" fill="#8dc8f3"/><path d="M14 14q-5 8 0 8t0-8z" fill="#1678cf" stroke="#1678cf"/></svg>
    <span class="temp">23°C</span>
    <svg class="ti" viewBox="0 0 24 24"><path d="M4 16l8-8 8 8" fill="none" stroke="#111" stroke-width="1.600"/></svg>
    <svg class="ti" viewBox="0 0 24 24"><path d="M6 7h9v11H6zM15 11l4-3v9l-4-3M6 4c3-3 7-3 10 0M6 21c3 2 7 2 10 0" fill="none" stroke="#111" stroke-width="1.500"/></svg>
    <svg class="ti" viewBox="0 0 24 24"><path d="M4 17c-4-4 0-9 4-8 3-6 12-4 12 2 4 1 3 6 0 6z" fill="#888" stroke="#222"/><circle cx="17" cy="17" r="6" fill="#da1c2e"/><path d="M14.500 14.500l5 5M19.500 14.500l-5 5" stroke="#fff" stroke-width="1.500"/></svg>
    <svg class="ti" viewBox="0 0 24 24"><rect x="7.500" y="0" width="9" height="16" rx="2"/><path d="M5 12c0 9 14 9 14 0M12 18v4M8 22h8" fill="none" stroke="#111" stroke-width="1.500"/></svg>
    <svg class="ti" viewBox="0 0 24 24"><path d="M2 4l20-3v18L2 20z" fill="none" stroke="#222" stroke-width="1.300"/><path d="M8 11c1-4 6-4 8-1V7M16 12c-1 4-6 4-8 1v3" fill="none" stroke="#222" stroke-width="1.500"/><circle cx="18" cy="18" r="5" fill="#2c6cb5"/></svg>
    <svg class="ti" viewBox="0 0 24 24"><path d="M8 9h13v7H8z"/><path d="M7 7h15v11H6M22 10h2v4h-2" fill="none" stroke="#111"/><path d="M2 3v4M6 3v4M1 7h6v4H4v4" fill="none" stroke="#111" stroke-width="1.600"/></svg>
    <svg class="ti" viewBox="0 0 24 24"><path d="M2 20C3 10 10 4 20 4M6 20c1-7 6-12 14-12M10 20c1-5 4-8 10-8M14 20c0-3 2-4 6-4" fill="none" stroke="#222" stroke-width="1.500"/><circle cx="19" cy="19" r="2"/></svg>
    <svg class="ti" viewBox="0 0 24 24"><path d="M2 9h4l5-5v16l-5-5H2z" fill="none" stroke="#222" stroke-width="1.400"/><path d="M14 9q2 3 0 6" fill="none" stroke="#222" stroke-width="1.500"/><path d="M17 6q4 6 0 12M20 4q5 8 0 16" fill="none" stroke="#888" stroke-width="1.500"/></svg>
    <div class="clock"><span>10:12 AM</span><span>1/11/2022</span></div>
    <svg class="notif" viewBox="0 0 34 34"><path d="M2 3h20v17H9l-4 4v-4H2z"/><path d="M5 8h14M5 12h14" stroke="#ddd" stroke-width="1.500"/><circle cx="21" cy="23" r="10" fill="#d9d9d9" stroke="#666"/><text x="16.500" y="28.500" font-size="15" font-weight="bold" fill="#111">9</text></svg>
  </div>
</div>
</body>
</html>
```
FILE: styles.css
```css
* { box-sizing: border-box; }
body { margin: 0; width: 1920px; height: 1080px; overflow: hidden; display: flex; flex-direction: column; background: #fff; font-family: "Liberation Sans", Arial, sans-serif; color: #111; }
.defs { position: absolute; }
svg { flex: none; display: block; }

.titlebar { height: 29px; flex: none; display: flex; align-items: center; background: #2d7c9b; color: #fff; font: 15px "Open Sans", sans-serif; padding-bottom: 1px; }
.app-ic { width: 20px; height: 19px; margin: 0 5px 0 2px; }
.title { letter-spacing: -.2px; white-space: nowrap; }
.win-btns { width: 140px; height: 29px; margin-left: auto; margin-right: 19px; }

.menubar { height: 29px; flex: none; display: flex; align-items: center; background: #efefef; border-bottom: 4px solid #d20505; font: 15px "Open Sans", sans-serif; padding: 0 0 3px 7px; }
.doc-ic { width: 15px; height: 21px; margin: 2px 13px 0 0; }
.mi { margin-right: 18px; letter-spacing: -.48px; white-space: nowrap; line-height: 20px; }
.brand { margin-left: auto; font: bold 21px/24px "Open Sans", sans-serif; letter-spacing: 2px; color: #222; display: flex; margin-right: 15px; padding-top: 3px; }
.brand sup { font-size: 14px; font-weight: normal; line-height: 8px; letter-spacing: 0; }
.macron { position: relative; }
.macron::after { content: ""; position: absolute; left: 2px; top: 1px; width: 9px; height: 3px; background: #e0464c; }
.mdi { width: 72px; height: 24px; }

.toolbars { height: 132px; flex: none; border-bottom: 1px solid #dedede; }
.row { display: flex; align-items: center; position: relative; }
.r1 { height: 42px; padding-left: 9px; }
.r2 { height: 46px; padding-left: 9px; }
.r3 { height: 41px; padding-left: 8px; }
.r1::after, .r2::after { content: ""; position: absolute; height: 2px; background: #e6e6e6; }
.r1::after { left: 968px; width: 475px; bottom: -3px; }
.r2::after { left: 906px; width: 62px; bottom: 0; }
.ic { width: 28px; height: 28px; margin: 0 4.140px; filter: drop-shadow(0 1px 1px rgba(0,0,0,.3)); }
.flat { filter: none; }
.nar { margin: 0 0 0 0; }
.g1 { margin-left: 12px; }
.g2 { margin-left: 23px; }
.combo { width: 187px; height: 27px; border: 1.500px solid #888; background: #fff; display: flex; align-items: center; justify-content: space-between; padding: 0 4px; font-size: 16px; letter-spacing: -.4px; }
.r1 .combo { margin-left: -1px; margin-right: 1px; }
.r1 .find { margin-left: 17px; }
.profile { margin-right: 1px; padding-left: 0; }
.profile b { padding-left: 1px; font-size: 15px; letter-spacing: -.2px; white-space: nowrap; }
.cv { width: 13px; height: 13px; color: #777; }
.bino { width: 30px; height: 28px; margin-left: 3px; }
.navs { width: 90px; height: 28px; margin-left: 1px; }
.tog { width: 36.280px; height: 37px; background: #cce8ff; border: 1px solid #99d1ff; display: grid; place-items: center; }
.tog i { width: 23px; height: 23px; border-radius: 50%; background: linear-gradient(#33a63b, #12761b); box-shadow: 0 1px 3px #555; color: #fff; font: bold 14px/23px "Open Sans", sans-serif; text-align: center; }
.tog .serif { font-family: "Liberation Serif", serif; }

.work { height: 810px; flex: none; display: flex; background: #fff; }
.left { width: 1474px; height: 810px; display: flex; flex-direction: column; background: #efefef; }
.tabs { height: 43px; flex: none; display: flex; align-items: flex-end; padding: 0 0 4px 9px; gap: 2px; }
.tab { width: 111px; height: 29px; border: 1.500px solid #333; border-radius: 5px 5px 0 0; background: #dcdcdc; color: #777; font: 15px "Open Sans", sans-serif; letter-spacing: -.5px; display: flex; align-items: center; justify-content: flex-end; }
.tab .tl { margin-right: 11px; }
.tab + .tab .tl { margin: 0 23px 0 auto; }
.tab.on { width: 116px; height: 31px; margin-left: -2px; background: #efefef; border-bottom: 0; border-left-width: 0; color: #000; font-weight: bold; box-shadow: inset 0 3px #f8bcbc; }
.tab.on .tl { margin-right: 21px; padding-bottom: 2px; }
.tic { width: 20px; height: 20px; margin-left: 0; }
.tic2 { width: 15px; height: 20px; margin-left: 3px; }
.docwin { height: 565px; flex: none; margin-left: 9px; width: 1457px; border-top: 3px solid #555; border-left: 3px solid #555; border-bottom: 1px solid #fff; display: grid; grid-template: 536px 24px / 1431px 20px; background: #efefef; }
.canvas { width: 1431px; height: 536px; background: #fff; }
.ar { width: 15px; height: 15px; color: #555; }
.up { transform: rotate(180deg); }
.lf { transform: rotate(90deg); }
.rt { transform: rotate(-90deg); }
.dim { color: #bbb; }
.thumb { background: #cdcdcd; display: block; }
.vs { display: flex; flex-direction: column; align-items: center; background: #efefef; }
.split { width: 20px; height: 8px; border: 1px solid #eee; border-right: 2px solid #777; border-bottom: 2px solid #777; margin-bottom: 4px; }
.vs .thumb { width: 19px; height: 283px; margin-top: 2px; margin-bottom: 207px; }
.hs { grid-column: 1 / 3; display: flex; align-items: center; padding-bottom: 2px; }
.split2 { width: 7px; height: 20px; border: 1px solid #fff; border-right: 2px solid #777; border-bottom: 2px solid #777; background: #fff; }
.hs .lf { margin-left: 3px; }
.hs .rt { margin-left: auto; margin-right: 8px; }
.grip { width: 12px; height: 12px; margin: 8px 2px 0 0; }
.hsplit { height: 8px; flex: none; margin-top: 4px; border-top: 2px solid #aaa; border-bottom: 2px solid #666; background: #cfd8ee; width: 1472px; }
.output { flex: none; height: 187px; display: flex; background: #fff; padding-top: 4px; border-bottom: 3px solid #d4d4d4; }
.gut { width: 24px; display: flex; flex-direction: column; align-items: center; gap: 1px; }
.gut b { width: 14px; height: 14px; font: bold 14px/9px "Open Sans", sans-serif; text-align: center; background: #ddd; border: 1px solid; border-color: #eee #777 #777 #eee; margin-top: 2px; }
.gut span { width: 14px; height: 14px; background: #eee; border: 1px solid; border-color: #ddd #777 #777 #ddd; }
.gut i { width: 6px; height: 142px; border: 1px solid #bbb; border-width: 0 1px; }
.log { width: 1444px; height: 178px; display: grid; grid-template: 153px 21px / 1421px 19px; border-top: 3px solid #666; border-left: 2px solid #777; background: #efefef; }
.lines { background: #fff; padding: 1px 0 0 10px; }
.lines p { margin: 0; font-size: 17.500px; line-height: 20px; white-space: nowrap; letter-spacing: -.01px; }
.lines .wide { letter-spacing: .1px; }
.lvs { display: flex; flex-direction: column; align-items: center; padding-top: 4px; }
.lvs .thumb { width: 18px; height: 21px; margin: 91px 0 5px; }
.lhs { display: flex; align-items: center; padding-left: 2px; }
.lhs .thumb { width: 21px; height: 19px; margin-left: 3px; margin-right: 1362px; }

.palette { width: 79px; height: 563px; background: #fff; border-bottom: 2px solid #e2e2e2; padding: 10px 0 0 2px; }
.pgrid { display: grid; grid-template-columns: 36.500px 36.500px; grid-auto-rows: 38.800px; }
.pgrid svg { width: 36.500px; height: 38px; padding: 4.500px 4px; filter: drop-shadow(0 1px 1px rgba(0,0,0,.3)); }
.pgrid .sel { background: #cce8ff; border: 1px solid #99d1ff; filter: none; }
.vsplit { width: 5px; background: #cfd8ee; border-right: 2px solid #777; height: 810px; }

.place { width: 358px; height: 809px; border-right: 2px solid #d5d5d5; padding-left: 4px; font-size: 15px; letter-spacing: -.8px; }
.phead { height: 20px; display: flex; justify-content: space-between; font: 14.500px/18px "Open Sans", sans-serif; letter-spacing: -.4px; padding-left: 1px; }
.phead svg { width: 60px; height: 16px; margin: 3px -4px 0 0; }
.lab { background: #efefef; white-space: nowrap; padding: 0 4px 0 1px; line-height: 17px; }
.off { color: #999; }
.prow { display: flex; height: 36px; align-items: center; padding: 1px 0 0 7px; margin-top: 0; }
.prow .lab { margin: -5px auto 0 0; padding-left: 2px; }
.sq { width: 36px; height: 24px; background: #efefef; display: grid; place-items: center; }
.sq svg { width: 20px; height: 20px; }
.big { width: 37px; height: 32px; margin-left: 2px; }
.big svg { width: 26px; height: 26px; }
.prow .big:last-child { margin-right: 54px; }
.pinput { width: 289px; height: 25px; border: 1.500px solid #777; margin-left: 7px; margin-top: 1px; padding-left: 3px; line-height: 21px; letter-spacing: -.9px; }
.plist-h { display: flex; height: 27px; align-items: center; padding-left: 7px; margin-top: 1px; }
.fill { width: 199px; height: 16px; background: #efefef; margin: 3px 1px 0 4px; }
.plist-h .lab { width: 52px; padding-left: 0; }
.lb { display: flex; border: 1.500px solid #888; background: #fff; overflow: hidden; }
.parts { width: 294px; height: 138px; margin-left: 6px; margin-top: 1px; padding-left: 1px; }
.lb ul { list-style: none; margin: 1px 0; padding: 0; flex: 1; }
.lb li { height: 16.300px; line-height: 16.300px; padding-left: 2px; letter-spacing: -.85px; }
.hl { background: #0078d7; color: #fff; }
.sb { width: 19px; background: #efefef; margin: 1px 2px 1px 1px; display: flex; flex-direction: column; align-items: center; padding: 4px 0; }
.sb .thumb { width: 19px; height: 21px; }
.parts .thumb { margin: 48px 0 28px; }
fieldset { margin: 0; padding: 0; border: 1.500px solid #e2e2e2; min-width: 0; }
legend { background: #efefef; padding: 0 3px; line-height: 18px; margin-left: 8px; }
.libs { width: 300px; height: 148px; margin-top: 7px; }
.libs legend { margin-left: 7px; }
.btns { display: flex; gap: 5px; margin: -4px 0 1px 164px; }
.libs .lb { width: 276px; height: 103px; margin-left: 10px; padding-left: 1px; }
.libs .thumb { margin: 35px 0 9px; }
.lower { display: flex; margin: 7px 0 0 2px; height: 153px; }
.preview { width: 142px; height: 153px; }
.pk { margin-left: 4px; margin-top: -4px; width: 153px; }
.pk fieldset { height: 112px; padding-left: 6px; }
.pk legend { margin-left: 2px; }
.kr { display: flex; height: 24px; align-items: center; justify-content: space-between; padding-right: 9px; }
.kr:nth-of-type(1) { margin-top: -2px; }
.one { width: 28px; padding: 0 0 0 10px; margin-right: 8px; }
.k2 { height: 40px; margin-top: 2px; }
.dd { width: 96px; height: 26px; background: #ccc; display: flex; align-items: center; justify-content: flex-end; padding-right: 4px; border: 1px solid #bbb; }
.dd .cv { color: #aaa; }
.homo { width: 96px; padding: 0; }
.spbar { margin: 12px 0 0 5px; width: 146px; height: 29px; background: #efefef; padding: 3px; }
.spbar svg { width: 21px; height: 21px; }
.radios { display: flex; align-items: center; height: 20px; margin: 0 0 0 2px; }
.rad { width: 16px; height: 16px; border: 1.500px solid #ccc; border-radius: 50%; background: #fff; }
.rad.on { border-color: #444; box-shadow: inset 0 0 0 2px #fff; background: #222; }
.radios .lab { padding: 0 3px; margin: 0 6px 0 1px; }
.search { display: flex; align-items: center; gap: 5px; margin: 3px 0 0 3px; }
.search b { width: 24px; height: 20px; background: #e2e2e2; border: 1.500px solid #aaa; text-align: center; line-height: 18px; }
.search .lab { padding-right: 9px; }

.status { height: 26px; flex: none; display: flex; align-items: center; border-top: 1px solid #ddd; font: 14.500px "Open Sans", sans-serif; letter-spacing: -.38px; padding-top: 4px; }
.s1 { margin-left: 1112px; border-left: 1px solid #ddd; padding-left: 4px; width: 535px; }
.s2 { border-left: 1px solid #ddd; padding-left: 4px; width: 103px; }
.wall { height: 4px; flex: none; background: linear-gradient(90deg,#111 0 8px,#9a9b98 8px 140px,#514d52 180px,#746457 260px,#8d8887 310px,#70545a 500px,#111 506px,#5c3629 515px,#a76c54 600px,#221c1c 660px 790px,#805747 810px,#cfddd8 900px 1006px,#111 1007px 1012px,#8c8c8c 1013px,#ddcdd2 1100px,#c8d2e5 1180px,#222a3d 1200px,#dce0e8 1215px,#3d3033 1230px 1350px,#c6a6a0 1370px,#d0c6a9 1509px,#151819 1510px); }

.taskbar { height: 50px; flex: none; display: flex; background: #d6d6d6; }
.start { width: 61px; display: grid; place-items: center; }
.start svg { width: 21px; height: 20px; }
.sbox { width: 429px; height: 49px; margin-top: 1px; background: #fff; border: 1px solid #c5c5c5; display: flex; align-items: center; padding: 0 0 2px 13px; font: 18px "Open Sans", sans-serif; letter-spacing: -.37px; color: #333; }
.sbox svg { width: 22px; height: 22px; margin-right: 13px; }
.tb { width: 62px; height: 50px; display: grid; place-items: center; position: relative; }
.tb svg { width: 32px; height: 32px; }
.cort { width: 60px; }
.tv { width: 62px; }
.run { background: linear-gradient(#2d7c9b, #2d7c9b) center bottom / 51px 3px no-repeat; }
.act { width: 62px; background: #f0f0f0; border-bottom: 3px solid #2d7c9b; margin-left: 1px; }
.alert { background: #f8b078; border-bottom: 3px solid #ff7800; width: 61px; margin-left: 1px; }
.av { position: absolute; left: 29px; top: 22px; width: 20px; height: 20px; border-radius: 50%; color: #fff; font: bold 11px/20px "Open Sans", sans-serif; text-align: center; }
.vio { background: #a887dd; color: #ffe3a0; }
.ora { background: #ea6c0d; }
.tray { margin-left: auto; display: flex; align-items: center; font: 17px "Open Sans", sans-serif; border-right: 1px solid #aaa; margin-right: 5px; height: 50px; }
.wx { width: 28px; height: 24px; margin-right: 11px; }
.temp { width: 56px; letter-spacing: -.3px; }
.ti { width: 22px; height: 22px; margin-right: 8px; }
.clock { width: 80px; display: flex; flex-direction: column; align-items: center; font-size: 15px; line-height: 23px; letter-spacing: -.25px; }
.notif { width: 34px; height: 34px; margin: 0 13px 0 14px; }
```
